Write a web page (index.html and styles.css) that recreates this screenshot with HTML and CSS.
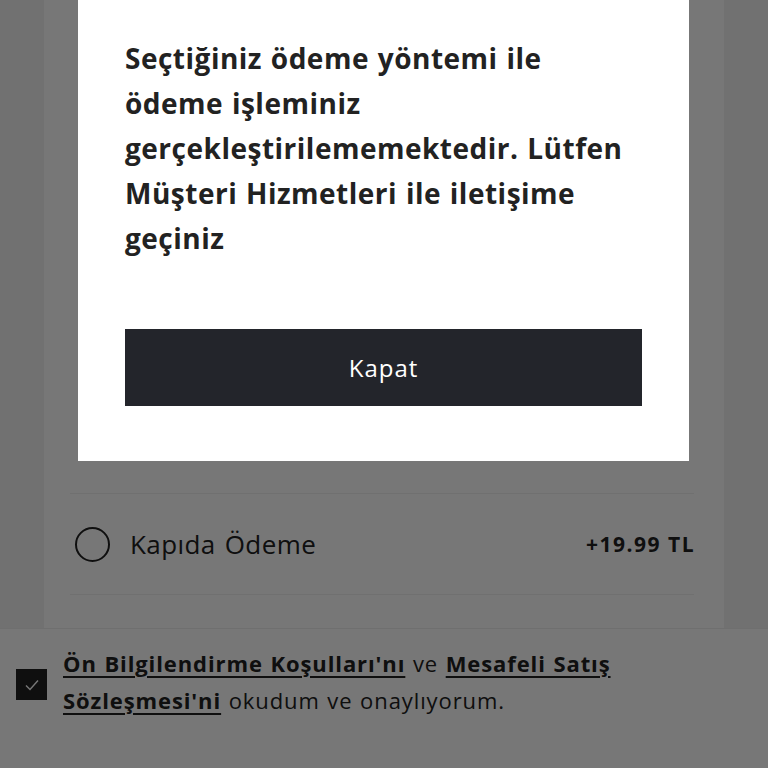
FILE: index.html
```html
<!DOCTYPE html>
<html lang="tr">
<head>
<meta charset="utf-8">
<link rel="stylesheet" href="styles.css">
</head>
<body>
<main class="page">
  <section class="card">
    <div class="row row-top"></div>
    <div class="row">
      <span class="radio"></span>
      <span class="label">Kapıda Ödeme</span>
      <span class="price">+19.99 TL</span>
    </div>
    <div class="row">
      <span class="radio"></span>
      <span class="label">Havale Ödeme</span>
    </div>
  </section>
</main>
<footer class="terms">
  <span class="check"><svg width="18" height="18" viewBox="0 0 18 18"><path d="M3 9.5 L7 13.5 L15 4.5" fill="none" stroke="#fff" stroke-width="1.4"/></svg></span>
  <p class="terms-text"><a class="link">Ön Bilgilendirme Koşulları'nı</a> ve <a class="link">Mesafeli Satış</a><br><a class="link">Sözleşmesi'ni</a> okudum ve onaylıyorum.</p>
</footer>
<div class="overlay"></div>
<div class="modal">
  <p class="modal-text">Seçtiğiniz ödeme yöntemi ile<br>ödeme işleminiz<br>gerçekleştirilememektedir. Lütfen<br>Müşteri Hizmetleri ile iletişime<br>geçiniz</p>
  <button class="btn">Kapat</button>
</div>
</body>
</html>
```
FILE: styles.css
```css
html, body { margin: 0; padding: 0; }
body {
  background: #f3f3f3;
  font-family: "Open Sans", "Noto Sans", sans-serif;
  color: #222;
  width: 768px;
  height: 768px;
  overflow: hidden;
}
.page { padding: 0 44px; }
.card {
  background: #fff;
  padding: 0 30px 0 26px;
  height: 768px;
}
.row {
  height: 100px;
  border-bottom: 1px solid #efefef;
  display: flex;
  align-items: center;
}
.row-top { height: 493px; }
.radio {
  width: 31px; height: 31px;
  border: 2px solid #222;
  border-radius: 50%;
  margin-left: 5px;
  margin-right: 20px;
  flex: none;
}
.label {
  font-size: 26px;
  letter-spacing: 0.4px;
  word-spacing: 2px;
  flex: 1;
}
.price {
  font-size: 21px;
  font-weight: 700;
  letter-spacing: 1.5px;
  margin-right: -1px;
}
.terms {
  position: fixed;
  left: 0; right: 0; bottom: 0;
  height: 140px;
  background: #fff;
  border-top: 1px solid #eee;
  display: flex;
  align-items: flex-start;
  padding: 0 16px;
  box-sizing: border-box;
}
.check {
  width: 31px; height: 31px;
  background: #222;
  display: flex; align-items: center; justify-content: center;
  margin-top: 40px;
  flex: none;
}
.terms-text {
  margin: 16px 0 0 16px;
  font-size: 22px;
  line-height: 37px;
  letter-spacing: 0.9px;
  word-spacing: 1px;
  color: #222;
  white-space: nowrap;
}
.link {
  font-weight: 700;
  text-decoration: underline;
  text-underline-offset: 4px;
  text-decoration-thickness: 2px;
}
.overlay {
  position: fixed; inset: 0;
  background: rgba(0,0,0,0.533);
}
.modal {
  position: fixed;
  left: 78px; top: 0;
  width: 611px;
  box-sizing: border-box;
  background: #fff;
  padding: 36px 47px 55px 47px;
}
.modal-text {
  margin: 0;
  font-size: 28px;
  font-weight: 700;
  line-height: 45px;
  letter-spacing: 0.5px;
  word-spacing: 1px;
  color: #222;
  height: 258px;
  white-space: nowrap;
}
.btn {
  display: block;
  width: 517px;
  height: 77px;
  margin: 35px 0 0 0;
  border: 0;
  background: #23252b;
  color: #fff;
  font-family: inherit;
  font-size: 24px;
  letter-spacing: 1px;
}
```
